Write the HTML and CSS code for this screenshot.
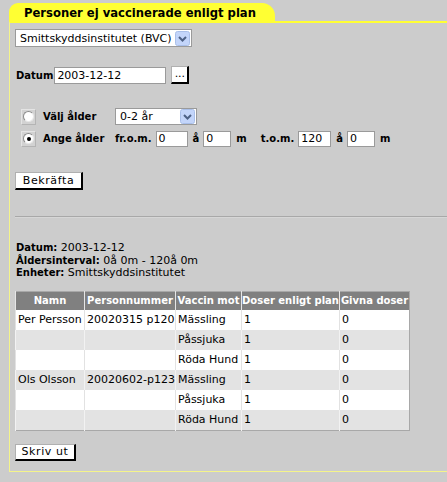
FILE: index.html
```html
<!DOCTYPE html>
<html lang="sv">
<head>
<meta charset="utf-8">
<title>Personer ej vaccinerade enligt plan</title>
<link rel="stylesheet" href="styles.css">
</head>
<body>
<div class="page">
  <div class="tab">Personer ej vaccinerade enligt plan</div>
  <div class="panel">
    <div class="select unit-select">
      <span class="sel-text">Smittskyddsinstitutet (BVC)</span>
      <span class="sel-arrow"><svg width="15" height="15" viewBox="0 0 15 15"><rect x="0.5" y="0.5" width="14" height="14" rx="2" fill="#c3d5fa" stroke="#a9bfe9"/><path d="M4 6 L7.5 9.5 L11 6" fill="none" stroke="#4d6185" stroke-width="2"/></svg></span>
    </div>

    <div class="datum-row">
      <span class="lbl">Datum</span>
      <span class="field date">2003-12-12</span>
      <span class="btn dots">...</span>
    </div>

    <div class="age-grid">
      <span class="radio"><span class="circle"></span></span>
      <span class="lbl">Välj ålder</span>
      <div class="select age-select">
        <span class="sel-text">0-2 år</span>
        <span class="sel-arrow"><svg width="15" height="15" viewBox="0 0 15 15"><rect x="0.5" y="0.5" width="14" height="14" rx="2" fill="#c3d5fa" stroke="#a9bfe9"/><path d="M4 6 L7.5 9.5 L11 6" fill="none" stroke="#4d6185" stroke-width="2"/></svg></span>
      </div>

      <span class="radio"><span class="circle checked"></span></span>
      <span class="lbl">Ange ålder</span>
      <div class="range">
        <span class="lbl">fr.o.m.</span>
        <span class="field w32">0</span>
        <span class="lbl unit">å</span>
        <span class="field w28">0</span>
        <span class="lbl unit">m</span>
        <span class="lbl tom">t.o.m.</span>
        <span class="field w33">120</span>
        <span class="lbl unit">å</span>
        <span class="field w28">0</span>
        <span class="lbl unit">m</span>
      </div>
    </div>

    <div class="btn confirm">Bekräfta</div>

    <div class="sep"></div>

    <div class="summary">
      <div><span class="lbl">Datum:</span> 2003-12-12</div>
      <div><span class="lbl">Åldersinterval:</span> 0å 0m - 120å 0m</div>
      <div><span class="lbl">Enheter:</span> Smittskyddsinstitutet</div>
    </div>

    <table class="results">
      <colgroup>
        <col class="c1"><col class="c2"><col class="c3"><col class="c4"><col class="c5">
      </colgroup>
      <thead>
        <tr><th>Namn</th><th>Personnummer</th><th>Vaccin mot</th><th>Doser enligt plan</th><th>Givna doser</th></tr>
      </thead>
      <tbody>
        <tr><td>Per Persson</td><td>20020315 p120</td><td>Mässling</td><td>1</td><td>0</td></tr>
        <tr class="alt"><td></td><td></td><td>Påssjuka</td><td>1</td><td>0</td></tr>
        <tr><td></td><td></td><td>Röda Hund</td><td>1</td><td>0</td></tr>
        <tr class="alt"><td>Ols Olsson</td><td>20020602-p123</td><td>Mässling</td><td>1</td><td>0</td></tr>
        <tr><td></td><td></td><td>Påssjuka</td><td>1</td><td>0</td></tr>
        <tr class="alt"><td></td><td></td><td>Röda Hund</td><td>1</td><td>0</td></tr>
      </tbody>
    </table>

    <div class="btn print">Skriv ut</div>
  </div>
</div>
</body>
</html>
```

FILE: styles.css
```css
html, body {
  margin: 0;
  padding: 0;
  background: #cccccc;
}

body {
  font-family: "DejaVu Sans", Verdana, sans-serif;
  font-size: 11px;
  color: #000;
}

.page {
  padding-top: 3px;
  padding-left: 9px;
}

.tab {
  width: 266px;
  height: 18px;
  box-sizing: border-box;
  background: #ffff33;
  border-radius: 9px 13px 0 0;
  padding-left: 15px;
  font-weight: bold;
  font-size: 11.6px;
  line-height: 20px;
}

.panel {
  border-top: 2px solid #ffff33;
  border-left: 1px solid #f4f48a;
  border-bottom: 1px solid #f4f48a;
  padding: 6px 0 10px 5px;
}

.lbl {
  font-weight: bold;
  font-size: 10px;
}

/* fake select */
.select {
  box-sizing: border-box;
  display: flex;
  align-items: center;
  justify-content: space-between;
  background: #fff;
  border: 1px solid #9a9a9a;
  padding: 0 1px 0 4px;
  font-size: 11px;
}

.sel-arrow {
  display: flex;
}

.unit-select {
  width: 177px;
  height: 18px;
}

.age-select {
  width: 82px;
  height: 17px;
}

/* fake input */
.field {
  box-sizing: border-box;
  display: inline-block;
  background: #fff;
  border: 1px solid #9a9a9a;
  height: 16px;
  line-height: 14px;
  padding-left: 2px;
  font-size: 11px;
}

.datum-row {
  margin-top: 19px;
  display: flex;
  align-items: center;
  padding-left: 1px;
}

.field.date {
  width: 112px;
  height: 17px;
  line-height: 15px;
  margin-left: 1px;
}

.btn {
  box-sizing: border-box;
  background: #fff;
  border-top: 1px solid #b0b0b0;
  border-left: 1px solid #b0b0b0;
  border-right: 2px solid #000;
  border-bottom: 2px solid #000;
  font-size: 11px;
  text-align: center;
  letter-spacing: 0.6px;
}

.dots {
  width: 18px;
  height: 18px;
  line-height: 13px;
  margin-left: 5px;
  letter-spacing: 0;
}

.age-grid {
  margin-top: 24px;
  margin-left: 6px;
  display: grid;
  grid-template-columns: 22px 72px auto;
  grid-template-rows: 17px 17px;
  row-gap: 5px;
  align-items: center;
}

.radio {
  box-sizing: border-box;
  width: 15px;
  height: 16px;
  border-top: 1px solid #e4e4e4;
  border-left: 1px solid #e4e4e4;
  border-right: 1px solid #b4b4b4;
  border-bottom: 1px solid #b4b4b4;
  background: #d2d2d2;
  display: flex;
  align-items: center;
  justify-content: center;
}

.circle {
  box-sizing: border-box;
  width: 11px;
  height: 11px;
  border-radius: 50%;
  background: #fff;
  border-top: 1px solid #8a8a8a;
  border-left: 1px solid #8a8a8a;
  border-right: 1px solid #e8e8e8;
  border-bottom: 1px solid #e8e8e8;
  display: flex;
  align-items: center;
  justify-content: center;
}

.circle.checked::after {
  content: "";
  width: 4px;
  height: 4px;
  border-radius: 50%;
  background: #000;
}

.range {
  display: flex;
  align-items: center;
}

.range .field {
  margin-left: 4px;
}

.w32 { width: 32px; }
.w28 { width: 28px; }
.w33 { width: 33px; }

.unit {
  margin-left: 5px;
}

.tom {
  margin-left: 14px;
}

.confirm {
  margin-top: 25px;
  width: 68px;
  height: 18px;
  line-height: 15px;
}

.sep {
  margin-top: 26px;
  height: 1px;
  background: #a8a8a8;
  border-bottom: 1px solid #d6d6d6;
}

.summary {
  margin-top: 24px;
  padding-left: 1px;
  line-height: 12.5px;
  font-size: 11px;
}

.results {
  margin-top: 11px;
  border-collapse: collapse;
  table-layout: fixed;
  width: 394px;
  border: 1px solid #a8a8a8;
  font-size: 11px;
}

.c1 { width: 69px; }
.c2 { width: 91px; }
.c3 { width: 66px; }
.c4 { width: 98px; }
.c5 { width: 70px; }

.results th {
  background: #808080;
  color: #fff;
  font-weight: bold;
  font-size: 10px;
  height: 18px;
  padding: 0;
  border-left: 1px solid #e6e6e6;
  white-space: nowrap;
  overflow: hidden;
  text-align: center;
}

.results td {
  background: #fff;
  height: 20px;
  padding: 0 0 0 2px;
  border-left: 1px solid #e2e2e2;
  white-space: nowrap;
  overflow: hidden;
}

.results tr.alt td {
  background: #e3e3e3;
  border-left-color: #f2f2f2;
}

.print {
  margin-top: 13px;
  width: 61px;
  height: 17px;
  line-height: 14px;
}
```
